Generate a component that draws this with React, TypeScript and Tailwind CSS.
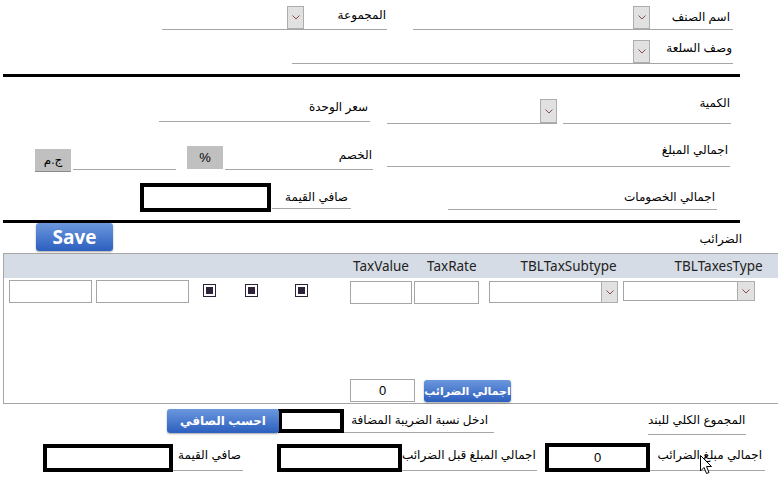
import React from "react";

const LINE = "border-b border-[#a6a6a6]";

function DropBtn({ className = "" }: { className?: string }) {
  return (
    <div
      className={`flex items-center justify-center border border-[#adadad] bg-[#e1e1e1] ${className}`}
    >
      <svg width="8" height="5" viewBox="0 0 8 5">
        <path d="M0.5 0.5 L4 4 L7.5 0.5" fill="none" stroke="#8b4a4a" strokeWidth="1" />
      </svg>
    </div>
  );
}

function Label({ text, className = "" }: { text: string; className?: string }) {
  return (
    <span
      dir="rtl"
      className={`ml-auto whitespace-nowrap text-[12px] leading-[16px] text-black ${className}`}
    >
      {text}
    </span>
  );
}

function BlackBox({ className = "", value }: { className?: string; value?: string }) {
  return (
    <div
      className={`flex items-center justify-center border-4 border-black bg-white text-[13px] ${className}`}
    >
      {value}
    </div>
  );
}

function BlueBtn({ text, className = "" }: { text: string; className?: string }) {
  return (
    <div
      dir="rtl"
      className={`flex items-center justify-center whitespace-nowrap rounded-[3px] bg-gradient-to-b from-[#6b97dc] to-[#2c5fbf] font-bold text-white shadow-[0_1px_2px_rgba(0,0,0,0.35)] ${className}`}
    >
      {text}
    </div>
  );
}

function Check({ className = "" }: { className?: string }) {
  return (
    <div
      className={`flex h-[13px] w-[13px] items-center justify-center border border-[#2e2238] bg-white ${className}`}
    >
      <div className="h-[7px] w-[7px] bg-[#2e2238]" />
    </div>
  );
}

export default function App() {
  return (
    <div className="relative h-[479px] w-[778px] overflow-hidden bg-white font-['Liberation_Sans','DejaVu_Sans',sans-serif] text-black">
      {/* row 1 */}
      <div className="flex h-[30px] items-end">
        <div className={`ml-[162px] flex h-[29px] w-[225px] items-end ${LINE}`}>
          <DropBtn className="ml-[125px] h-[23px] w-[17px]" />
          <Label text="المجموعة" className="mb-[6px] pr-[1px]" />
        </div>
        <div className={`ml-[26px] flex h-[29px] w-[320px] items-end ${LINE}`}>
          <DropBtn className="ml-[220px] h-[23px] w-[17px]" />
          <Label text="اسم الصنف" className="mb-[4px] pr-[3px]" />
        </div>
      </div>

      {/* row 2 */}
      <div className="flex h-[34px] items-end">
        <div className={`ml-[292px] flex h-[30px] w-[441px] items-end ${LINE}`}>
          <DropBtn className="ml-[341px] h-[23px] w-[17px]" />
          <Label text="وصف السلعة" className="mb-[7px] pr-[1px]" />
        </div>
      </div>

      <div className="ml-[3px] mt-[10px] h-[3px] w-[737px] bg-black" />

      {/* row 3 */}
      <div className="flex h-[47px] items-end">
        <div className={`mb-[2px] ml-[159px] flex h-[30px] w-[211px] items-end ${LINE}`}>
          <Label text="سعر الوحدة" className="mb-[6px] pr-[2px]" />
        </div>
        <div className={`ml-[17px] flex h-[24px] w-[170px] items-end justify-end ${LINE}`}>
          <DropBtn className="h-[24px] w-[17px]" />
        </div>
        <div className={`ml-[6px] flex h-[30px] w-[168px] items-end ${LINE}`}>
          <Label text="الكمية" className="mb-[12px] pr-[1px]" />
        </div>
      </div>

      {/* row 4 */}
      <div className="flex h-[48px] items-end">
        <div
          dir="rtl"
          className="ml-[35px] flex h-[23px] w-[36px] items-center justify-center border-b border-[#8a8a8a] bg-[#c0c0c0] text-[12px]"
        >
          ج.م
        </div>
        <div className={`mb-[2px] ml-[2px] h-[20px] w-[103px] ${LINE}`} />
        <div className="mb-[3px] ml-[11px] flex h-[23px] w-[36px] items-center justify-center bg-[#c0c0c0] text-[13px]">
          %
        </div>
        <div className={`mb-[2px] ml-[2px] flex h-[26px] w-[148px] items-end ${LINE}`}>
          <Label text="الخصم" className="mb-[6px] pr-[1px]" />
        </div>
        <div className={`mb-[5px] ml-[14px] flex h-[28px] w-[343px] items-end ${LINE}`}>
          <Label text="اجمالي المبلغ" className="mb-[8px] pr-[2px]" />
        </div>
      </div>

      {/* row 5 */}
      <div className="flex h-[43px] items-end">
        <BlackBox className="mb-[3px] ml-[140px] h-[29px] w-[131px]" />
        <div className={`mb-[6px] ml-[1px] flex h-[24px] w-[79px] items-end ${LINE}`}>
          <Label text="صافي القيمة" className="mb-[3px] pr-[3px]" />
        </div>
        <div className={`mb-[5px] ml-[97px] flex h-[24px] w-[269px] items-end ${LINE}`}>
          <Label text="اجمالي الخصومات" className="mb-[4px] pr-[2px]" />
        </div>
      </div>

      <div className="ml-[3px] mt-[5px] h-[3px] w-[737px] bg-black" />

      {/* save row */}
      <div className="flex h-[30px] items-start">
        <BlueBtn
          text="Save"
          className="ml-[36px] h-[28px] w-[77px] font-['Open_Sans',sans-serif] text-[19px] leading-none"
        />
        <Label text="الضرائب" className="mr-[36px] mt-[8px]" />
      </div>

      {/* subform */}
      <div className="ml-[3px] flex h-[151px] flex-col border-b border-l border-t border-[#a6a6a6]">
        <div className="flex h-[24px] items-center bg-[#d6dce5] font-['Noto_Sans',sans-serif] text-[13.5px] text-[#222]">
          <span className="ml-[349px]">TaxValue</span>
          <span className="ml-[18px]">TaxRate</span>
          <span className="ml-[44px]">TBLTaxSubtype</span>
          <span className="ml-[58px]">TBLTaxesType</span>
        </div>
        <div className="mt-[2px] flex h-[24px] items-start">
          <div className="ml-[5px] h-[23px] w-[83px] border border-[#a6a6a6]" />
          <div className="ml-[4px] h-[23px] w-[93px] border border-[#a6a6a6]" />
          <Check className="ml-[14px] mt-[4px]" />
          <Check className="ml-[29px] mt-[4px]" />
          <Check className="ml-[37px] mt-[4px]" />
          <div className="ml-[42px] mt-[1px] h-[23px] w-[62px] border border-[#a6a6a6]" />
          <div className="ml-[2px] mt-[1px] h-[23px] w-[65px] border border-[#a6a6a6]" />
          <div className="ml-[10px] mt-[1px] flex h-[22px] w-[129px] justify-end border border-[#a6a6a6]">
            <DropBtn className="-my-px -mr-px h-[22px] w-[17px]" />
          </div>
          <div className="ml-[5px] mt-[1px] flex h-[20px] w-[132px] justify-end border border-[#a6a6a6]">
            <DropBtn className="-my-px -mr-px h-[20px] w-[18px]" />
          </div>
        </div>
        <div className="mt-auto mb-[1px] flex h-[23px] items-end">
          <div className="ml-[346px] flex h-[23px] w-[65px] items-center justify-center border border-[#a6a6a6] text-[13px]">
            0
          </div>
          <BlueBtn
            text="اجمالي الضرائب"
            className="ml-[9px] h-[22px] w-[87px] text-[11px]"
          />
        </div>
      </div>

      {/* bottom row 1 */}
      <div className="flex h-[31px] items-end">
        <BlueBtn
          text="احسب الصافي"
          className="relative z-10 mb-[2px] ml-[167px] h-[24px] w-[112px] text-[12px]"
        />
        <BlackBox className="mb-[2px] ml-[-1px] h-[24px] w-[66px]" />
        <div className={`mb-[2px] flex h-[26px] w-[150px] items-end ${LINE}`}>
          <Label text="ادخل نسبة الضريبة المضافة" className="mb-[4px] pr-[6px]" />
        </div>
        <div className={`ml-[154px] flex h-[28px] w-[98px] items-end ${LINE}`}>
          <Label text="المجموع الكلي للبند" className="mb-[6px] pr-[2px]" />
        </div>
      </div>

      {/* bottom row 2 */}
      <div className="flex h-[44px] items-start">
        <BlackBox className="ml-[43px] mt-[9px] h-[28px] w-[130px]" />
        <div className={`mt-[9px] flex h-[27px] w-[70px] items-end ${LINE}`}>
          <Label text="صافي القيمة" className="mb-[7px] pr-[2px]" />
        </div>
        <BlackBox className="ml-[34px] mt-[9px] h-[28px] w-[125px]" />
        <div className={`mt-[9px] flex h-[27px] w-[135px] items-end ${LINE}`}>
          <Label text="اجمالي المبلغ قبل الضرائب" className="mb-[7px] pr-[4px]" />
        </div>
        <BlackBox value="0" className="ml-[8px] mt-[8px] h-[29px] w-[105px]" />
        <div className={`mt-[9px] flex h-[27px] w-[115px] items-end ${LINE}`}>
          <Label text="اجمالي مبلغ الضرائب" className="mb-[7px] pr-[3px]" />
        </div>
      </div>

      {/* mouse cursor */}
      <svg
        className="absolute left-[700px] top-[455px]"
        width="13"
        height="20"
        viewBox="0 0 13 20"
      >
        <path
          d="M0.5 0.5 L0.5 16 L4 12.5 L6.5 18.5 L9 17.5 L6.5 11.5 L11.5 11.5 Z"
          fill="white"
          stroke="black"
          strokeWidth="1"
        />
      </svg>
    </div>
  );
}
